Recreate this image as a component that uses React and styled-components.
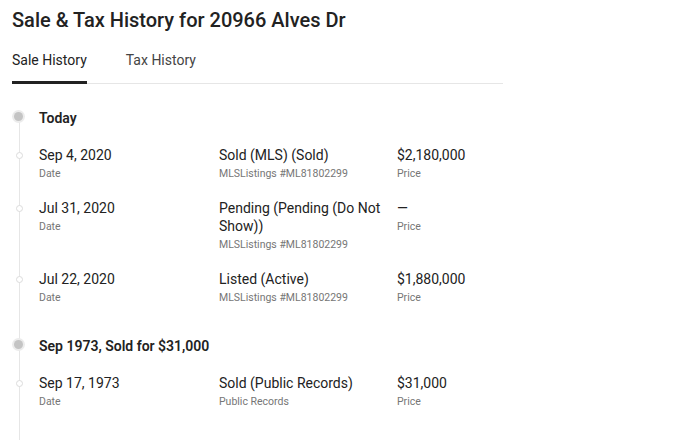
import React from "react";
import styled, { createGlobalStyle } from "styled-components";

const Global = createGlobalStyle`
  body {
    margin: 0;
    background: #fff;
    font-family: Roboto, "Liberation Sans", sans-serif;
    color: #333;
  }
`;

const groups = [
  {
    title: "Today",
    rows: [
      { date: "Sep 4, 2020", event: "Sold (MLS) (Sold)", source: "MLSListings #ML81802299", price: "$2,180,000" },
      { date: "Jul 31, 2020", event: "Pending (Pending (Do Not Show))", source: "MLSListings #ML81802299", price: "—" },
      { date: "Jul 22, 2020", event: "Listed (Active)", source: "MLSListings #ML81802299", price: "$1,880,000" },
    ],
  },
  {
    title: "Sep 1973, Sold for $31,000",
    rows: [
      { date: "Sep 17, 1973", event: "Sold (Public Records)", source: "Public Records", price: "$31,000" },
    ],
  },
];

const App = () => {
  return (
    <Page>
      <Global />
      <Title>Sale &amp; Tax History for 20966 Alves Dr</Title>
      <Tabs>
        <Tab active>Sale History</Tab>
        <Tab>Tax History</Tab>
      </Tabs>
      <Timeline>
        {groups.map((g) => (
          <Group key={g.title}>
            <GroupHead>{g.title}</GroupHead>
            {g.rows.map((r) => (
              <Row key={r.date}>
                <Cell>
                  <Main>{r.date}</Main>
                  <Sub>Date</Sub>
                </Cell>
                <Cell>
                  <Main>{r.event}</Main>
                  <Sub>{r.source}</Sub>
                </Cell>
                <Cell>
                  <Main>{r.price}</Main>
                  <Sub>Price</Sub>
                </Cell>
              </Row>
            ))}
          </Group>
        ))}
      </Timeline>
    </Page>
  );
};

const Page = styled.div`
  width: 491px;
  padding: 8px 12px 0 12px;
`;

const Title = styled.h2`
  margin: 0;
  font-size: 20px;
  font-weight: 500;
  line-height: 24px;
  color: #222;
`;

const Tabs = styled.div`
  display: flex;
  gap: 39px;
  margin-top: 18px;
  border-bottom: 1px solid #e6e6e6;
`;

const Tab = styled.div`
  font-size: 14px;
  line-height: 20px;
  padding-bottom: 11px;
  color: ${(p) => (p.active ? "#222" : "#444")};
  border-bottom: 3px solid ${(p) => (p.active ? "#222" : "transparent")};
  margin-bottom: -1px;
`;

const Timeline = styled.div`
  position: relative;
  margin-top: 24px;
  padding-left: 27px;

  &::before {
    content: "";
    position: absolute;
    left: 7px;
    top: 10px;
    bottom: -40px;
    width: 1px;
    background: #e6e6e6;
  }
`;

const Group = styled.div`
  display: flex;
  flex-direction: column;
  gap: 16px;
  margin-bottom: 29px;
`;

const GroupHead = styled.div`
  position: relative;
  font-size: 14px;
  font-weight: 600;
  line-height: 20px;
  color: #222;
  margin-bottom: 2px;

  &::before {
    content: "";
    position: absolute;
    left: -25px;
    top: 4px;
    width: 9px;
    height: 9px;
    border-radius: 50%;
    background: #c4c4c4;
    box-shadow: 0 0 0 2px #ececec;
  }
`;

const Row = styled.div`
  position: relative;
  display: grid;
  grid-template-columns: 180px 178px 1fr;

  &::before {
    content: "";
    position: absolute;
    left: -23px;
    top: 6px;
    width: 5px;
    height: 5px;
    border-radius: 50%;
    background: #fff;
    border: 1px solid #dcdcdc;
  }
`;

const Cell = styled.div`
  display: flex;
  flex-direction: column;
  padding-right: 14px;
`;

const Main = styled.div`
  font-size: 14px;
  line-height: 18px;
  color: #222;
`;

const Sub = styled.div`
  font-size: 10.5px;
  line-height: 18px;
  margin-top: 1px;
  color: #767676;
`;

export default App;
